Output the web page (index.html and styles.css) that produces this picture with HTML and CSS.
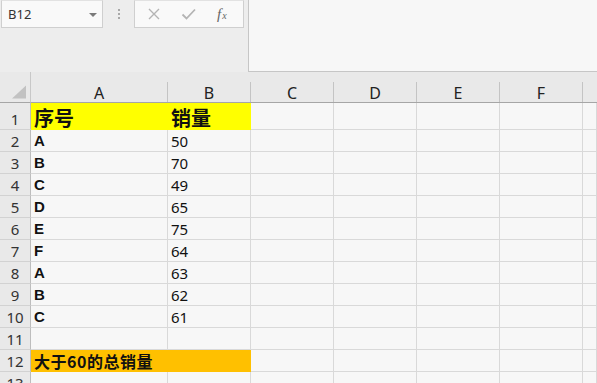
FILE: index.html
```html
<!DOCTYPE html>
<html lang="zh">
<head>
<meta charset="utf-8">
<link rel="stylesheet" href="styles.css">
</head>
<body>
<div class="app">
  <div class="toolbar">
    <div class="namebox">
      <span class="name">B12</span>
      <span class="caret"></span>
    </div>
    <div class="grip"><i></i><i></i><i></i></div>
    <div class="fbuttons">
      <svg class="ico" width="14" height="14" viewBox="0 0 14 14"><path d="M2 2 L12 12 M12 2 L2 12" stroke="#b4b4b4" stroke-width="1.4" fill="none"/></svg>
      <svg class="ico" width="16" height="14" viewBox="0 0 16 14"><path d="M1.5 7.5 L5.5 11.5 L14 2.5" stroke="#b4b4b4" stroke-width="1.8" fill="none"/></svg>
      <span class="fx">f<sub>x</sub></span>
    </div>
    <div class="formula"></div>
  </div>
  <div class="sheet">
    <div class="corner"><svg width="15" height="14" viewBox="0 0 15 14"><polygon points="0,14 15,14 15,0" fill="#c2c2c2"/></svg></div>
    <div class="colhead"><span>A</span></div>
    <div class="colhead"><span>B</span></div>
    <div class="colhead"><span>C</span></div>
    <div class="colhead"><span>D</span></div>
    <div class="colhead"><span>E</span></div>
    <div class="colhead"><span>F</span></div>
    <div class="colhead last"><span></span></div>

    <div class="rowhead r1">1</div>
    <div class="cell r1 yellow title">序号</div>
    <div class="cell r1 yellow title">销量</div>
    <div class="cell r1"></div><div class="cell r1"></div><div class="cell r1"></div><div class="cell r1"></div><div class="cell r1"></div>

    <div class="rowhead">2</div><div class="cell key">A</div><div class="cell">50</div><div class="cell"></div><div class="cell"></div><div class="cell"></div><div class="cell"></div><div class="cell"></div>
    <div class="rowhead">3</div><div class="cell key">B</div><div class="cell">70</div><div class="cell"></div><div class="cell"></div><div class="cell"></div><div class="cell"></div><div class="cell"></div>
    <div class="rowhead">4</div><div class="cell key">C</div><div class="cell">49</div><div class="cell"></div><div class="cell"></div><div class="cell"></div><div class="cell"></div><div class="cell"></div>
    <div class="rowhead">5</div><div class="cell key">D</div><div class="cell">65</div><div class="cell"></div><div class="cell"></div><div class="cell"></div><div class="cell"></div><div class="cell"></div>
    <div class="rowhead">6</div><div class="cell key">E</div><div class="cell">75</div><div class="cell"></div><div class="cell"></div><div class="cell"></div><div class="cell"></div><div class="cell"></div>
    <div class="rowhead">7</div><div class="cell key">F</div><div class="cell">64</div><div class="cell"></div><div class="cell"></div><div class="cell"></div><div class="cell"></div><div class="cell"></div>
    <div class="rowhead">8</div><div class="cell key">A</div><div class="cell">63</div><div class="cell"></div><div class="cell"></div><div class="cell"></div><div class="cell"></div><div class="cell"></div>
    <div class="rowhead">9</div><div class="cell key">B</div><div class="cell">62</div><div class="cell"></div><div class="cell"></div><div class="cell"></div><div class="cell"></div><div class="cell"></div>
    <div class="rowhead">10</div><div class="cell key">C</div><div class="cell">61</div><div class="cell"></div><div class="cell"></div><div class="cell"></div><div class="cell"></div><div class="cell"></div>
    <div class="rowhead">11</div><div class="cell"></div><div class="cell"></div><div class="cell"></div><div class="cell"></div><div class="cell"></div><div class="cell"></div><div class="cell"></div>
    <div class="rowhead">12</div><div class="cell orange total">大于60的总销量</div><div class="cell orange"></div><div class="cell"></div><div class="cell"></div><div class="cell"></div><div class="cell"></div><div class="cell"></div>
    <div class="rowhead">13</div><div class="cell"></div><div class="cell"></div><div class="cell"></div><div class="cell"></div><div class="cell"></div><div class="cell"></div><div class="cell"></div>
  </div>
</div>
</body>
</html>
```

FILE: styles.css
```css
html, body {
  margin: 0;
  padding: 0;
  background: #ececec;
  overflow: hidden;
}
.app {
  width: 597px;
  height: 383px;
  overflow: hidden;
  font-family: "Noto Sans", "Noto Sans CJK SC", sans-serif;
  color: #111;
}
.toolbar {
  display: flex;
  align-items: flex-start;
  height: 72px;
  background: #ededed;
}
.namebox {
  box-sizing: border-box;
  margin-left: 1px;
  width: 102px;
  height: 28px;
  background: #f9f9f9;
  border: 1px solid #cfcfcf;
  border-top-color: #e2e2e2;
  display: flex;
  align-items: center;
  justify-content: space-between;
  padding: 0 5px 0 6px;
}
.name {
  font-size: 13px;
  color: #333;
  line-height: 1;
}
.caret {
  width: 0;
  height: 0;
  border-left: 4px solid transparent;
  border-right: 4px solid transparent;
  border-top: 4px solid #7a7a7a;
  margin-top: 1px;
}
.grip {
  width: 31px;
  height: 28px;
  display: flex;
  flex-direction: column;
  align-items: center;
  justify-content: center;
  gap: 2px;
}
.grip i {
  display: block;
  width: 2px;
  height: 2px;
  background: #a8a8a8;
}
.fbuttons {
  box-sizing: border-box;
  width: 110px;
  height: 28px;
  background: #f9f9f9;
  border: 1px solid #cfcfcf;
  border-top-color: #e2e2e2;
  display: flex;
  align-items: center;
  padding-left: 12px;
}
.fbuttons .ico:first-child { margin-right: 20px; }
.fbuttons .ico:nth-child(2) { margin-right: 20px; }
.fx {
  font-family: "Liberation Serif", serif;
  font-style: italic;
  font-size: 15px;
  color: #666;
  line-height: 1;
}
.fx sub {
  font-size: 10px;
  vertical-align: 0;
  margin-left: 1px;
}
.formula {
  box-sizing: border-box;
  margin-left: 4px;
  flex: 1;
  height: 72px;
  background: #f7f7f7;
  border-left: 1px solid #c6c6c6;
  border-bottom: 1px solid #c6c6c6;
}
.sheet {
  display: grid;
  grid-template-columns: 31px 137px 83px 83px 83px 83px 83px 1fr;
  grid-template-rows: 31px 27px repeat(12, 22px);
  background: #f7f7f7;
}
.corner {
  box-sizing: border-box;
  background: #e9e9e9;
  border-right: 1px solid #c8c8c8;
  border-bottom: 1px solid #a6a6a6;
  display: flex;
  align-items: flex-end;
  padding: 0 4px 3px 12px;
}
.colhead {
  box-sizing: border-box;
  background: #e9e9e9;
  border-bottom: 1px solid #a6a6a6;
  padding-top: 10px;
}
.colhead span {
  box-sizing: border-box;
  display: flex;
  align-items: flex-end;
  justify-content: center;
  height: 100%;
  border-right: 1px solid #c4c4c4;
  font-size: 16px;
  line-height: 16px;
  padding-bottom: 1px;
  color: #222;
}
.colhead.last span { border-right: none; }
.rowhead {
  box-sizing: border-box;
  background: #e9e9e9;
  border-right: 1px solid #bdbdbd;
  border-bottom: 1px solid #d2d2d2;
  display: flex;
  align-items: flex-end;
  justify-content: center;
  font-size: 15px;
  line-height: 15px;
  padding-bottom: 2px;
  color: #333;
}
.cell {
  box-sizing: border-box;
  border-right: 1px solid #d9d9d9;
  border-bottom: 1px solid #d9d9d9;
  display: flex;
  align-items: flex-end;
  padding: 0 0 2px 3px;
  font-size: 15px;
  line-height: 16px;
  white-space: nowrap;
  color: #111;
}
.key {
  font-weight: bold;
  font-size: 15px;
  font-family: "Liberation Sans", "Noto Sans CJK SC", sans-serif;
}
.title {
  font-family: "Noto Sans CJK SC", sans-serif;
  font-weight: bold;
  font-size: 20px;
  line-height: 22px;
  padding-bottom: 0;
}
.total {
  font-family: "Noto Sans CJK SC", sans-serif;
  font-weight: bold;
  font-size: 16px;
  line-height: 18px;
  padding-bottom: 1px;
  letter-spacing: 0.5px;
}
.yellow {
  background: #ffff00;
  border-color: #ffff00;
}
.orange {
  background: #ffc000;
  border-color: #ffc000;
}
```
